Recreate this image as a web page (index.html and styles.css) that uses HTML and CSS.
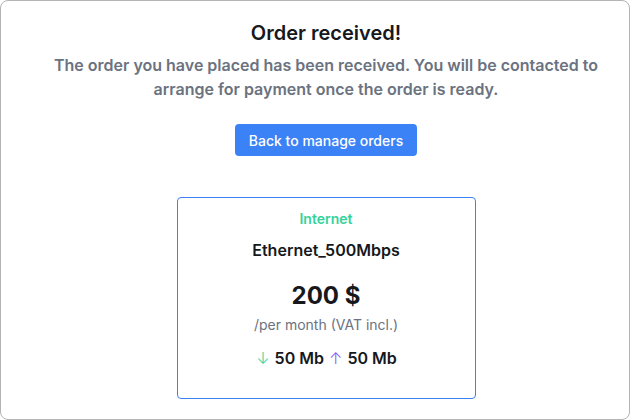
FILE: index.html
```html
<!DOCTYPE html>
<html>
<head>
<meta charset="utf-8">
<link rel="stylesheet" href="styles.css">
</head>
<body>
<div class="panel">
  <h1 class="title">Order received!</h1>
  <p class="subtitle">The order you have placed has been received. You will be contacted to arrange for payment once the order is ready.</p>
  <button class="btn">Back to manage orders</button>
  <div class="card">
    <div class="category">Internet</div>
    <div class="name">Ethernet_500Mbps</div>
    <div class="price">200 $</div>
    <div class="period">/per month (VAT incl.)</div>
    <div class="speeds"><span class="down">↓</span> 50 Mb <span class="up">↑</span> 50 Mb</div>
  </div>
</div>
</body>
</html>
```
FILE: styles.css
```css
* { box-sizing: border-box; }
html, body { margin: 0; padding: 0; background: #fff; }
body { font-family: Inter, "Noto Sans", sans-serif; color: #1f2328; }
.panel {
  width: 630px;
  height: 420px;
  border: 1px solid #b4b4b4;
  border-radius: 8px;
  display: flex;
  flex-direction: column;
  align-items: center;
  padding-top: 18px;
  padding-left: 22px;
}
.title {
  margin: 0;
  font-size: 20px;
  line-height: 28px;
  font-weight: 600;
  color: #16181d;
}
.subtitle {
  margin: 6px 0 0;
  width: 570px;
  text-align: center;
  font-size: 16px;
  line-height: 24px;
  font-weight: 600;
  color: #6b7280;
}
.btn {
  margin-top: 23px;
  height: 32px;
  padding: 0 14px;
  border: none;
  border-radius: 4px;
  background: #3b82f6;
  color: #fff;
  font-family: inherit;
  font-size: 14px;
  font-weight: 500;
}
.card {
  margin-top: 41px;
  width: 299px;
  height: 202px;
  border: 1px solid #3b82f6;
  border-radius: 4px;
  display: flex;
  flex-direction: column;
  align-items: center;
  padding-top: 11px;
}
.category { font-size: 14px; line-height: 20px; font-weight: 600; color: #34d399; }
.name { margin-top: 9px; font-size: 16px; line-height: 24px; font-weight: 600; color: #16181d; }
.price { margin-top: 18px; font-size: 24px; line-height: 32px; font-weight: 700; color: #16181d; }
.period { margin-top: 3px; font-size: 14px; line-height: 20px; color: #6b7280; }
.speeds { margin-top: 11px; font-size: 16px; line-height: 24px; font-weight: 600; color: #16181d; }
.down, .up { font-weight: 300; margin: 0 1px; }
.down { color: #34d399; }
.up { color: #8b5cf6; }
```
